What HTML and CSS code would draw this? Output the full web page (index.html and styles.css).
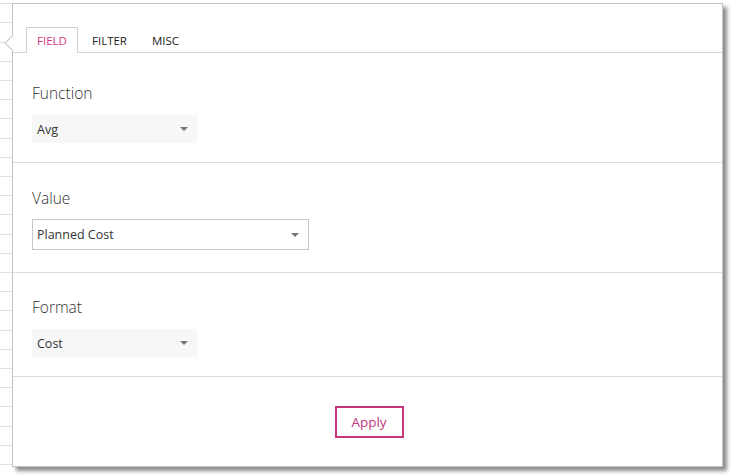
FILE: index.html
```html
<!DOCTYPE html>
<html>
<head>
<meta charset="utf-8">
<link rel="stylesheet" href="styles.css">
</head>
<body>
<div class="panel">
  <div class="tabs">
    <div class="tab active">FIELD</div>
    <div class="tab">FILTER</div>
    <div class="tab">MISC</div>
  </div>
  <div class="section first">
    <div class="label">Function</div>
    <div class="select plain"><span>Avg</span><i class="caret"></i></div>
  </div>
  <div class="section second">
    <div class="label">Value</div>
    <div class="select boxed"><span>Planned Cost</span><i class="caret"></i></div>
  </div>
  <div class="section third">
    <div class="label">Format</div>
    <div class="select plain"><span>Cost</span><i class="caret"></i></div>
  </div>
  <div class="footer">
    <button class="apply">Apply</button>
  </div>
</div>
</body>
</html>
```

FILE: styles.css
```css
html, body {
  margin: 0;
  padding: 0;
  background: #fff;
}
body {
  width: 732px;
  height: 476px;
  overflow: hidden;
  font-family: "Open Sans", "Noto Sans", sans-serif;
  background-image: repeating-linear-gradient(to bottom, transparent 0 3.2px, #e2e2e2 3.2px 4.2px, transparent 4.2px 19.2px);
  background-size: 12px 100%;
  background-repeat: no-repeat;
  display: flex;
  padding: 3px 0 0 12px;
  box-sizing: border-box;
}
.panel {
  position: relative;
  width: 711px;
  height: 464px;
  box-sizing: border-box;
  border: 1px solid #c4c4c4;
  background: #fff;
  box-shadow: 4px 4px 4px rgba(0, 0, 0, 0.45);
  display: flex;
  flex-direction: column;
}
.panel::before {
  content: "";
  position: absolute;
  left: -6px;
  top: 33px;
  width: 11px;
  height: 11px;
  background: #fff;
  border-left: 1px solid #c4c4c4;
  border-bottom: 1px solid #c4c4c4;
  transform: rotate(45deg);
}
.tabs {
  display: flex;
  margin-top: 23px;
  padding-left: 13px;
  border-bottom: 1px solid #d4d4d4;
  height: 25px;
}
.tab {
  font-size: 11.5px;
  color: #222;
  padding: 0 10px 0 10px;
  line-height: 25px;
  box-sizing: border-box;
  height: 26px;
  border: 1px solid transparent;
  border-bottom: none;
  margin-right: 3px;
}
.tab.active {
  color: #d0357f;
  border-color: #cfcfcf;
  background: #fff;
  width: 52px;
  padding-left: 10px;
}
.section {
  padding: 24px 19px 19px;
  border-bottom: 1px solid #dcdcdc;
  display: flex;
  flex-direction: column;
  align-items: flex-start;
}
.section.first { padding-top: 29px; }
.section.second { padding-top: 24px; padding-bottom: 22px; }
.section.third { padding-top: 23px; padding-bottom: 19px; }
.label {
  font-size: 15.5px;
  font-weight: 300;
  line-height: 22px;
  color: #333;
  margin-bottom: 11px;
}
.second .label { margin-bottom: 10px; }
.select {
  position: relative;
  display: flex;
  align-items: center;
  justify-content: space-between;
  box-sizing: border-box;
  font-size: 12.5px;
  color: #333;
  padding: 0 9px 0 5px;
}
.select.plain {
  width: 165px;
  height: 28px;
  background: #f7f7f7;
}
.select.boxed {
  width: 277px;
  height: 31px;
  border: 1px solid #c8c8c8;
  padding-left: 4px;
}
.caret {
  width: 0;
  height: 0;
  border-left: 4px solid transparent;
  border-right: 4px solid transparent;
  border-top: 4px solid #777;
}
.footer {
  flex: 1;
  display: flex;
  justify-content: center;
  align-items: flex-start;
  padding-top: 29px;
}
.apply {
  font-family: "Open Sans", "Noto Sans", sans-serif;
  width: 69px;
  height: 32px;
  border: 2px solid #c6357a;
  background: #fff;
  color: #c6357a;
  font-size: 13.5px;
  padding: 0;
  margin-left: 3px;
}
```
